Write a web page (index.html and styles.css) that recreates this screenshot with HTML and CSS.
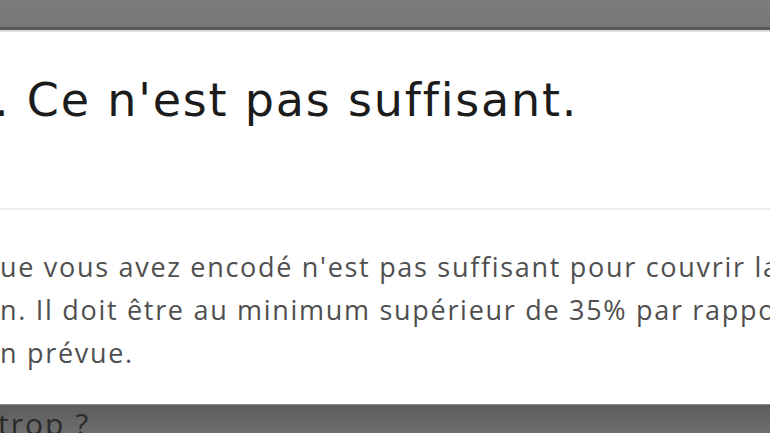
FILE: index.html
```html
<!DOCTYPE html>
<html lang="fr">
<head>
<meta charset="utf-8">
<title>Montant insuffisant</title>
<link rel="stylesheet" href="styles.css">
</head>
<body>
<div class="page">
  <div class="backdrop-top"></div>
  <div class="modal">
    <div class="modal-header">
      <h2 class="modal-title">. Ce n'est pas suffisant.</h2>
    </div>
    <div class="modal-body">
      <p class="line">ue vous avez encodé n'est pas suffisant pour couvrir la</p>
      <p class="line">n. Il doit être au minimum supérieur de 35% par rapport</p>
      <p class="line">n prévue.</p>
    </div>
  </div>
  <div class="backdrop-bottom">
    <span class="behind-text">trop ?</span>
  </div>
</div>
</body>
</html>
```
FILE: styles.css
```css
html, body {
  margin: 0;
  padding: 0;
  width: 770px;
  height: 433px;
  overflow: hidden;
  background: #7a7a7a;
}

.page {
  display: flex;
  flex-direction: column;
  height: 433px;
  font-family: "Open Sans", "Liberation Sans", sans-serif;
}

.backdrop-top {
  height: 27px;
  flex: none;
  background: linear-gradient(#7c7c7c, #777777);
  border-bottom: 3px solid #575757;
}

.modal {
  flex: none;
  background: #ffffff;
  border-top: 2px solid #dcdcdc;
  height: 372px;
  display: flex;
  flex-direction: column;
  overflow: hidden;
}

.modal-header {
  height: 176px;
  border-bottom: 2px solid #ececec;
  flex: none;
}

.modal-title {
  margin: 40px 0 0 -6px;
  font-family: "DejaVu Sans", "Liberation Sans", sans-serif;
  font-size: 46px;
  font-weight: 400;
  line-height: 56px;
  color: #1c1c1c;
  letter-spacing: 1.8px;
  white-space: nowrap;
}

.modal-body {
  padding-top: 35px;
}

.line {
  margin: 0;
  font-size: 27px;
  line-height: 43px;
  color: #4f4f4f;
  letter-spacing: 1.7px;
  white-space: nowrap;
}

.backdrop-bottom {
  flex: 1;
  background: linear-gradient(#5c5c5c, #6e6e6e);
  border-top: 1px solid #8c8c8c;
  overflow: hidden;
}

.behind-text {
  display: block;
  margin: 2px 0 0 -2px;
  font-size: 30px;
  line-height: 34px;
  color: #2a2a2a;
  letter-spacing: 2px;
}
```
